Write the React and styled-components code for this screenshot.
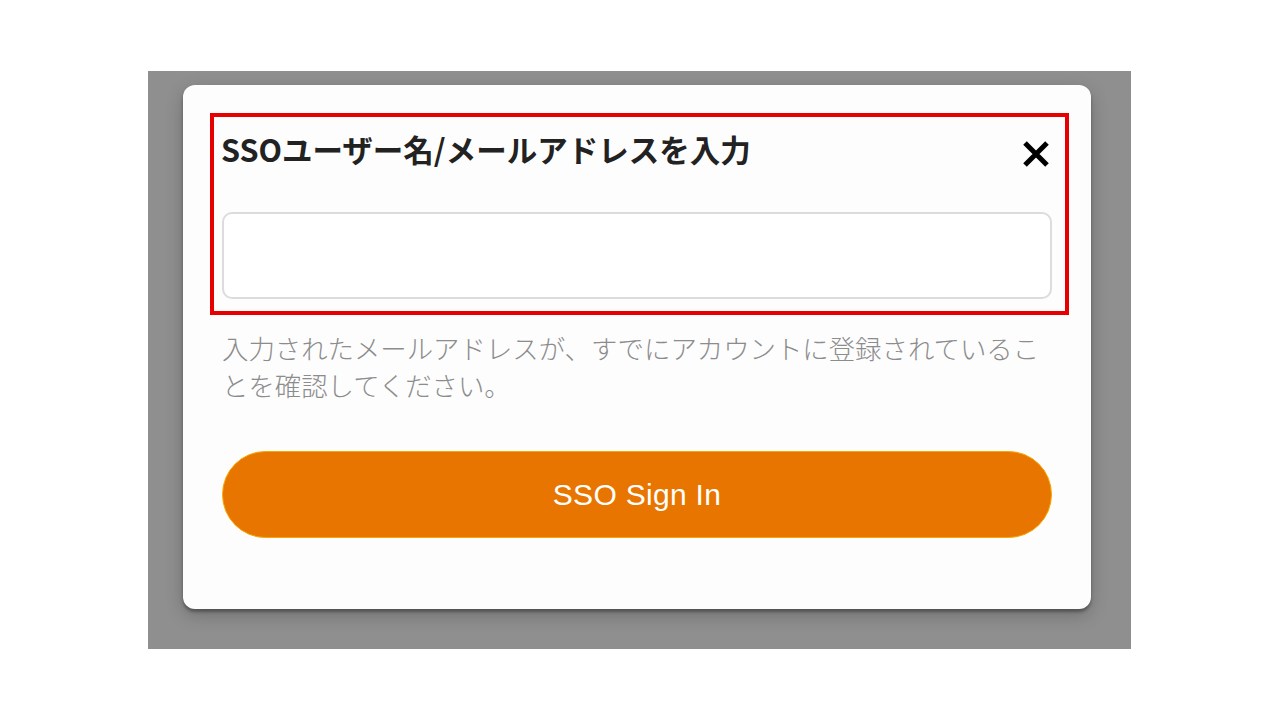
import React from 'react';
import styled, { createGlobalStyle } from 'styled-components';

const GlobalStyle = createGlobalStyle`
  html, body {
    margin: 0;
    padding: 0;
    background: #ffffff;
  }
  body {
    font-family: "Noto Sans CJK JP", "Noto Sans", sans-serif;
  }
`;

const Page = styled.div`
  width: 1280px;
  height: 720px;
  padding: 71px 0 0 148px;
  box-sizing: border-box;
`;

const Backdrop = styled.div`
  width: 983px;
  height: 578px;
  box-sizing: border-box;
  padding: 14px 40px 40px 35px;
  background: #908f90;
`;

const Modal = styled.div`
  width: 908px;
  height: 524px;
  box-sizing: border-box;
  padding: 28px 39px 0 39px;
  background: #fdfdfd;
  border-radius: 12px;
  box-shadow: 0 3px 3px rgba(0, 0, 0, 0.3), 0 6px 18px rgba(0, 0, 0, 0.22);
  display: flex;
  flex-direction: column;
`;

const Highlight = styled.div`
  margin: 0 -17px 0 -12px;
  border: 4px solid #e60000;
  padding: 12px 13px 12px 8px;
`;

const TitleRow = styled.div`
  display: flex;
  justify-content: space-between;
  align-items: flex-start;
  height: 41px;
`;

const Title = styled.h2`
  margin: 0 0 0 -1px;
  font-size: 30.5px;
  line-height: 40px;
  font-weight: 700;
  color: #222222;
  letter-spacing: 0;
`;

const CloseButton = styled.button`
  border: 0;
  padding: 0;
  margin: 11px 2px 0 0;
  background: none;
  width: 28px;
  height: 28px;
  display: flex;
  cursor: pointer;
`;

const Input = styled.input`
  display: block;
  width: 100%;
  height: 87px;
  margin-top: 42px;
  box-sizing: border-box;
  border: 2px solid #dcdcdc;
  border-radius: 10px;
  background: #ffffff;
  outline: none;
  font-size: 24px;
  padding: 0 16px;
`;

const Helper = styled.p`
  margin: 14px 0 0 0;
  font-size: 26.4px;
  line-height: 37px;
  color: #8c8c8c;
  font-weight: 300;
`;

const SignInButton = styled.button`
  margin-top: 48px;
  height: 87px;
  width: 100%;
  border: 1.5px solid #f6a800;
  border-radius: 44px;
  background: #e87500;
  color: #ffffff;
  font-family: "Liberation Sans", Arial, sans-serif;
  font-size: 30px;
  letter-spacing: 0.3px;
  cursor: pointer;
`;

function CloseIcon() {
  return (
    <svg width="28" height="28" viewBox="0 0 28 28">
      <path
        d="M3 3 L25 25 M25 3 L3 25"
        stroke="#000"
        strokeWidth="5"
        strokeLinecap="butt"
      />
    </svg>
  );
}

export default function App() {
  return (
    <Page>
      <GlobalStyle />
      <Backdrop>
        <Modal>
          <Highlight>
            <TitleRow>
              <Title>SSOユーザー名/メールアドレスを入力</Title>
              <CloseButton aria-label="close">
                <CloseIcon />
              </CloseButton>
            </TitleRow>
            <Input type="text" />
          </Highlight>
          <Helper>
            入力されたメールアドレスが、すでにアカウントに登録されていることを確認してください。
          </Helper>
          <SignInButton>SSO Sign In</SignInButton>
        </Modal>
      </Backdrop>
    </Page>
  );
}
